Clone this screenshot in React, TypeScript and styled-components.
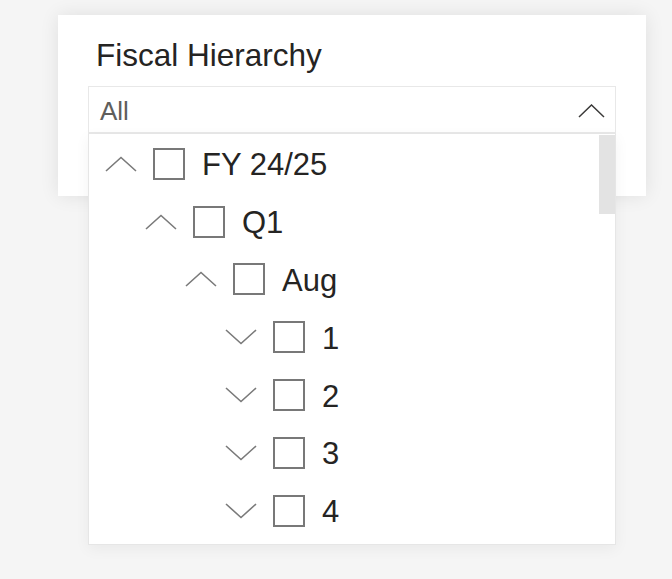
import React from 'react';
import styled, { createGlobalStyle } from 'styled-components';

const GlobalStyle = createGlobalStyle`
html, body {
    margin: 0;
    padding: 0;
    background: #f5f5f5;
    font-family: "Liberation Sans", Arial, sans-serif;
}
`;

const Page = styled.div`
width: 672px;
height: 579px;
padding: 15px 0 0 58px;
box-sizing: border-box;
overflow: hidden;
`;

const Card = styled.div`
width: 588px;
height: 181px;
background: #ffffff;
box-shadow: 0 0 18px rgba(0, 0, 0, 0.09);
padding: 22px 0 0 30px;
box-sizing: border-box;
`;

const Title = styled.div`
font-size: 31.5px;
line-height: 36px;
color: #252423;
padding-left: 8px;
margin-bottom: 13px;
`;

const Dropdown = styled.div`
position: relative;
width: 528px;
`;

const Header = styled.div`
height: 48px;
box-sizing: border-box;
border: 1px solid #e8e8e8;
border-bottom-width: 2px;
display: flex;
align-items: center;
justify-content: space-between;
padding: 3px 10px 0 11px;
background: #ffffff;
`;

const Value = styled.span`
font-size: 26px;
line-height: 30px;
color: #605e5c;
`;

const List = styled.div`
position: absolute;
top: 100%;
left: 0;
width: 528px;
height: 411px;
box-sizing: border-box;
background: #ffffff;
border: 1px solid #e6e6e6;
border-top: none;
padding-top: 1px;
overflow: hidden;
box-shadow: 0 4px 14px rgba(0, 0, 0, 0.05);
`;

const ScrollThumb = styled.div`
position: absolute;
top: 1px;
right: 0;
width: 16px;
height: 79px;
background: #e3e3e3;
`;

const Row = styled.div<{ $level: number }>`
height: 57.8px;
display: flex;
align-items: center;
padding-left: ${p => 16 + p.$level * 40}px;
`;

const Toggle = styled.svg`
width: 32px;
height: 16px;
margin-right: 16px;
flex-shrink: 0;
`;

const Checkbox = styled.span`
width: 32px;
height: 32px;
box-sizing: border-box;
border: 2px solid #787878;
margin-right: 17px;
flex-shrink: 0;
`;

const Label = styled.span`
font-size: 31px;
line-height: 36px;
padding-top: 3px;
color: #252423;
`;

const Chevron = ({ up, color = '#7a7a7a' }: { up: boolean; color?: string }) => (
    <Toggle viewBox="0 0 32 16">
        <polyline
            points={up ? '1,15 16,1.5 31,15' : '1,1 16,14.5 31,1'}
            fill="none"
            stroke={color}
            strokeWidth="1.6"
        />
    </Toggle>
);

const HeaderChevron = styled.svg`
width: 27px;
height: 14px;
`;

const items = [
    { label: 'FY 24/25', level: 0, open: true },
    { label: 'Q1', level: 1, open: true },
    { label: 'Aug', level: 2, open: true },
    { label: '1', level: 3, open: false },
    { label: '2', level: 3, open: false },
    { label: '3', level: 3, open: false },
    { label: '4', level: 3, open: false },
];

const App = () => (
    <>
        <GlobalStyle />
        <Page>
            <Card>
                <Title>Fiscal Hierarchy</Title>
                <Dropdown>
                    <Header>
                        <Value>All</Value>
                        <HeaderChevron viewBox="0 0 27 14">
                            <polyline points="1,13 13.5,1 26,13" fill="none" stroke="#3b3a39" strokeWidth="1.5" />
                        </HeaderChevron>
                    </Header>
                    <List>
                        {items.map(item => (
                            <Row key={item.label} $level={item.level}>
                                <Chevron up={item.open} />
                                <Checkbox />
                                <Label>{item.label}</Label>
                            </Row>
                        ))}
                        <ScrollThumb />
                    </List>
                </Dropdown>
            </Card>
        </Page>
    </>
);

export default App;
